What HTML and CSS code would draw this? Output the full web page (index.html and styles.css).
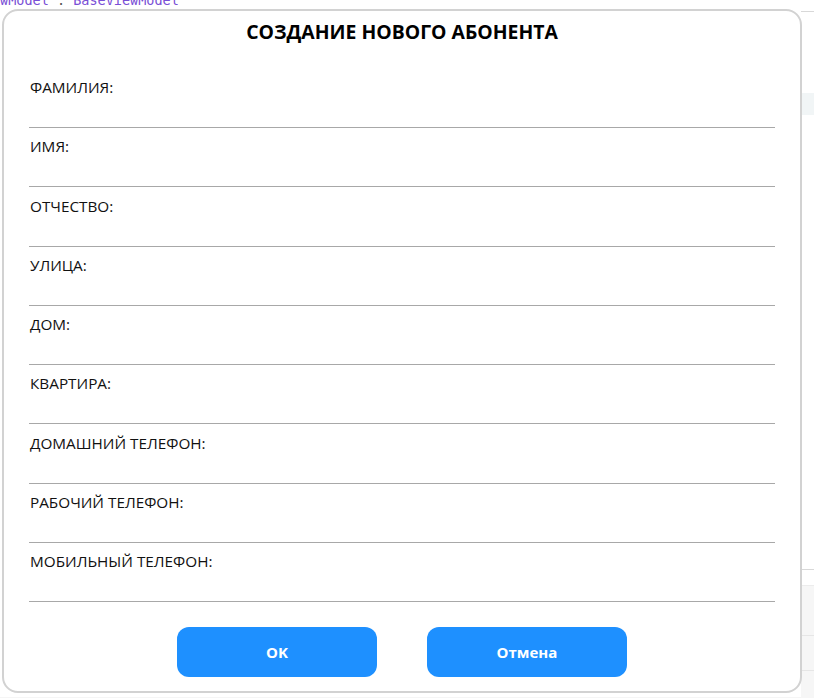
FILE: index.html
```html
<!DOCTYPE html>
<html lang="ru">
<head>
<meta charset="utf-8">
<title>Создание нового абонента</title>
<link rel="stylesheet" href="styles.css">
</head>
<body>
<div class="ide">
  <div class="ide-main">
    <div class="code-line"><span class="c-type">wModel</span> <span class="c-op">:</span> <span class="c-type">BaseViewModel</span></div>
    <div class="ide-fill"></div>
    <div class="ide-bottom"></div>
  </div>
  <div class="ide-side">
    <div class="side-top"></div>
    <div class="side-band"></div>
    <div class="side-gap"></div>
    <div class="side-row"></div>
    <div class="side-grey">
      <div class="side-grey-row"></div>
      <div class="side-grey-row"></div>
    </div>
  </div>
</div>

<div class="dialog">
  <h1 class="dialog-title">СОЗДАНИЕ НОВОГО АБОНЕНТА</h1>
  <form class="fields">
    <label class="field"><span class="field-label">ФАМИЛИЯ:</span><input class="field-input" type="text"></label>
    <label class="field"><span class="field-label">ИМЯ:</span><input class="field-input" type="text"></label>
    <label class="field"><span class="field-label">ОТЧЕСТВО:</span><input class="field-input" type="text"></label>
    <label class="field"><span class="field-label">УЛИЦА:</span><input class="field-input" type="text"></label>
    <label class="field"><span class="field-label">ДОМ:</span><input class="field-input" type="text"></label>
    <label class="field"><span class="field-label">КВАРТИРА:</span><input class="field-input" type="text"></label>
    <label class="field"><span class="field-label">ДОМАШНИЙ ТЕЛЕФОН:</span><input class="field-input" type="text"></label>
    <label class="field"><span class="field-label">РАБОЧИЙ ТЕЛЕФОН:</span><input class="field-input" type="text"></label>
    <label class="field"><span class="field-label">МОБИЛЬНЫЙ ТЕЛЕФОН:</span><input class="field-input" type="text"></label>
  </form>
  <div class="actions">
    <button class="btn" type="button">OK</button>
    <button class="btn" type="button">Отмена</button>
  </div>
</div>
</body>
</html>
```

FILE: styles.css
```css
* { box-sizing: border-box; }

html, body {
  margin: 0;
  padding: 0;
  width: 814px;
  height: 698px;
  overflow: hidden;
  background: #ffffff;
  font-family: "Open Sans", "Noto Sans", sans-serif;
}

/* Background IDE */
.ide {
  display: grid;
  grid-template-columns: 1fr 13px;
  height: 698px;
}

.ide-main {
  display: flex;
  flex-direction: column;
}

.code-line {
  font-family: "DejaVu Sans Mono", monospace;
  font-size: 13.5px;
  line-height: 16px;
  margin-top: -8px;
  white-space: nowrap;
  color: #7a4fd6;
}

.c-op { color: #555; }

.ide-fill { flex: 1; }

.ide-bottom {
  height: 8px;
  background: #f5f5f5;
}

.ide-side {
  display: flex;
  flex-direction: column;
}

.side-top {
  height: 82px;
  margin-top: 11px;
  border-top: 1px solid #d8d8d8;
}

.side-band {
  height: 22px;
  background: #f1f5f6;
}

.side-gap {
  height: 454px;
}

.side-row {
  height: 16px;
  border-top: 1px solid #d8d8d8;
}

.side-grey {
  flex: 1;
  background: #f6f6f6;
  border-top: 1px solid #ececec;
  padding-top: 49px;
}

.side-grey-row {
  height: 35px;
  border-top: 1px solid #e6e6e6;
}

/* Dialog */
.dialog {
  position: absolute;
  left: 2px;
  top: 9px;
  width: 800px;
  height: 684px;
  background: #ffffff;
  border: 2px solid #d2d2d2;
  border-radius: 16px;
  padding: 8px 25px 0 25px;
  display: flex;
  flex-direction: column;
}

.dialog-title {
  margin: 0;
  text-align: center;
  font-size: 19.4px;
  line-height: 26px;
  font-weight: 700;
  color: #000;
}

.fields {
  margin: 32px 0 0 0;
  display: flex;
  flex-direction: column;
}

.field {
  display: flex;
  flex-direction: column;
  height: 59.25px;
}

.field-label {
  font-size: 15.3px;
  line-height: 20px;
  color: #111;
  padding-left: 1px;
}

.field-input {
  height: 31px;
  border: 0;
  border-bottom: 1px solid #a8a8a8;
  outline: none;
  background: transparent;
  font: inherit;
  padding: 0;
}

.actions {
  display: flex;
  justify-content: center;
  gap: 50px;
  margin-top: 17px;
}

.btn {
  width: 200px;
  height: 50px;
  border: 0;
  border-radius: 12px;
  background: #1e90ff;
  color: #fff;
  font-family: inherit;
  font-size: 15px;
  font-weight: 700;
}
```
